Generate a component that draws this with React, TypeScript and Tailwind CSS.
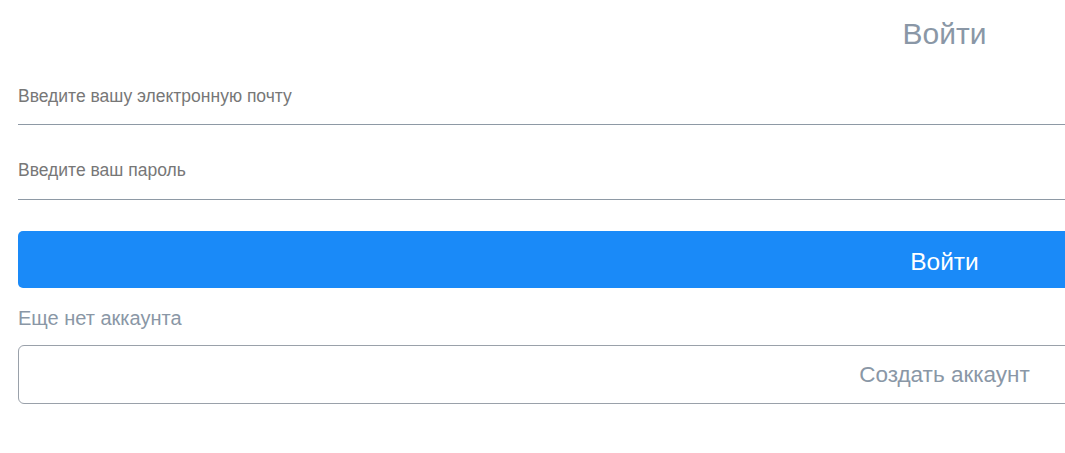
export default function App() {
  return (
    <div className="min-h-screen bg-white font-['Liberation_Sans',Arial,sans-serif]">
      <div className="ml-[18px] w-[1853px] pt-[14px]">
        <h1 className="text-center text-[30px] leading-[40px] text-[#8a97a6]">Войти</h1>

        <div className="mt-[30px] flex flex-col">
          <label className="h-[41px] border-b border-[#8e99a5] pt-[2px] text-[17.5px] leading-[20px] text-[#777]">
            Введите вашу электронную почту
          </label>
          <label className="mt-[33px] h-[42px] border-b border-[#8e99a5] pt-[2px] text-[17.5px] leading-[20px] text-[#777]">
            Введите ваш пароль
          </label>
        </div>

        <button className="mt-[31px] flex h-[57px] w-full items-center justify-center rounded-[5px] bg-[#1a8af8] pt-[6px] text-[24.5px] text-white">
          Войти
        </button>

        <p className="mt-[18px] text-[20px] leading-[24px] text-[#8a97a6]">Еще нет аккаунта</p>

        <button className="mt-[15px] flex h-[59px] w-full items-center justify-center rounded-[6px] border border-[#9aa1aa] bg-white text-[22.5px] text-[#8a97a6]">
          Создать аккаунт
        </button>
      </div>
    </div>
  );
}
